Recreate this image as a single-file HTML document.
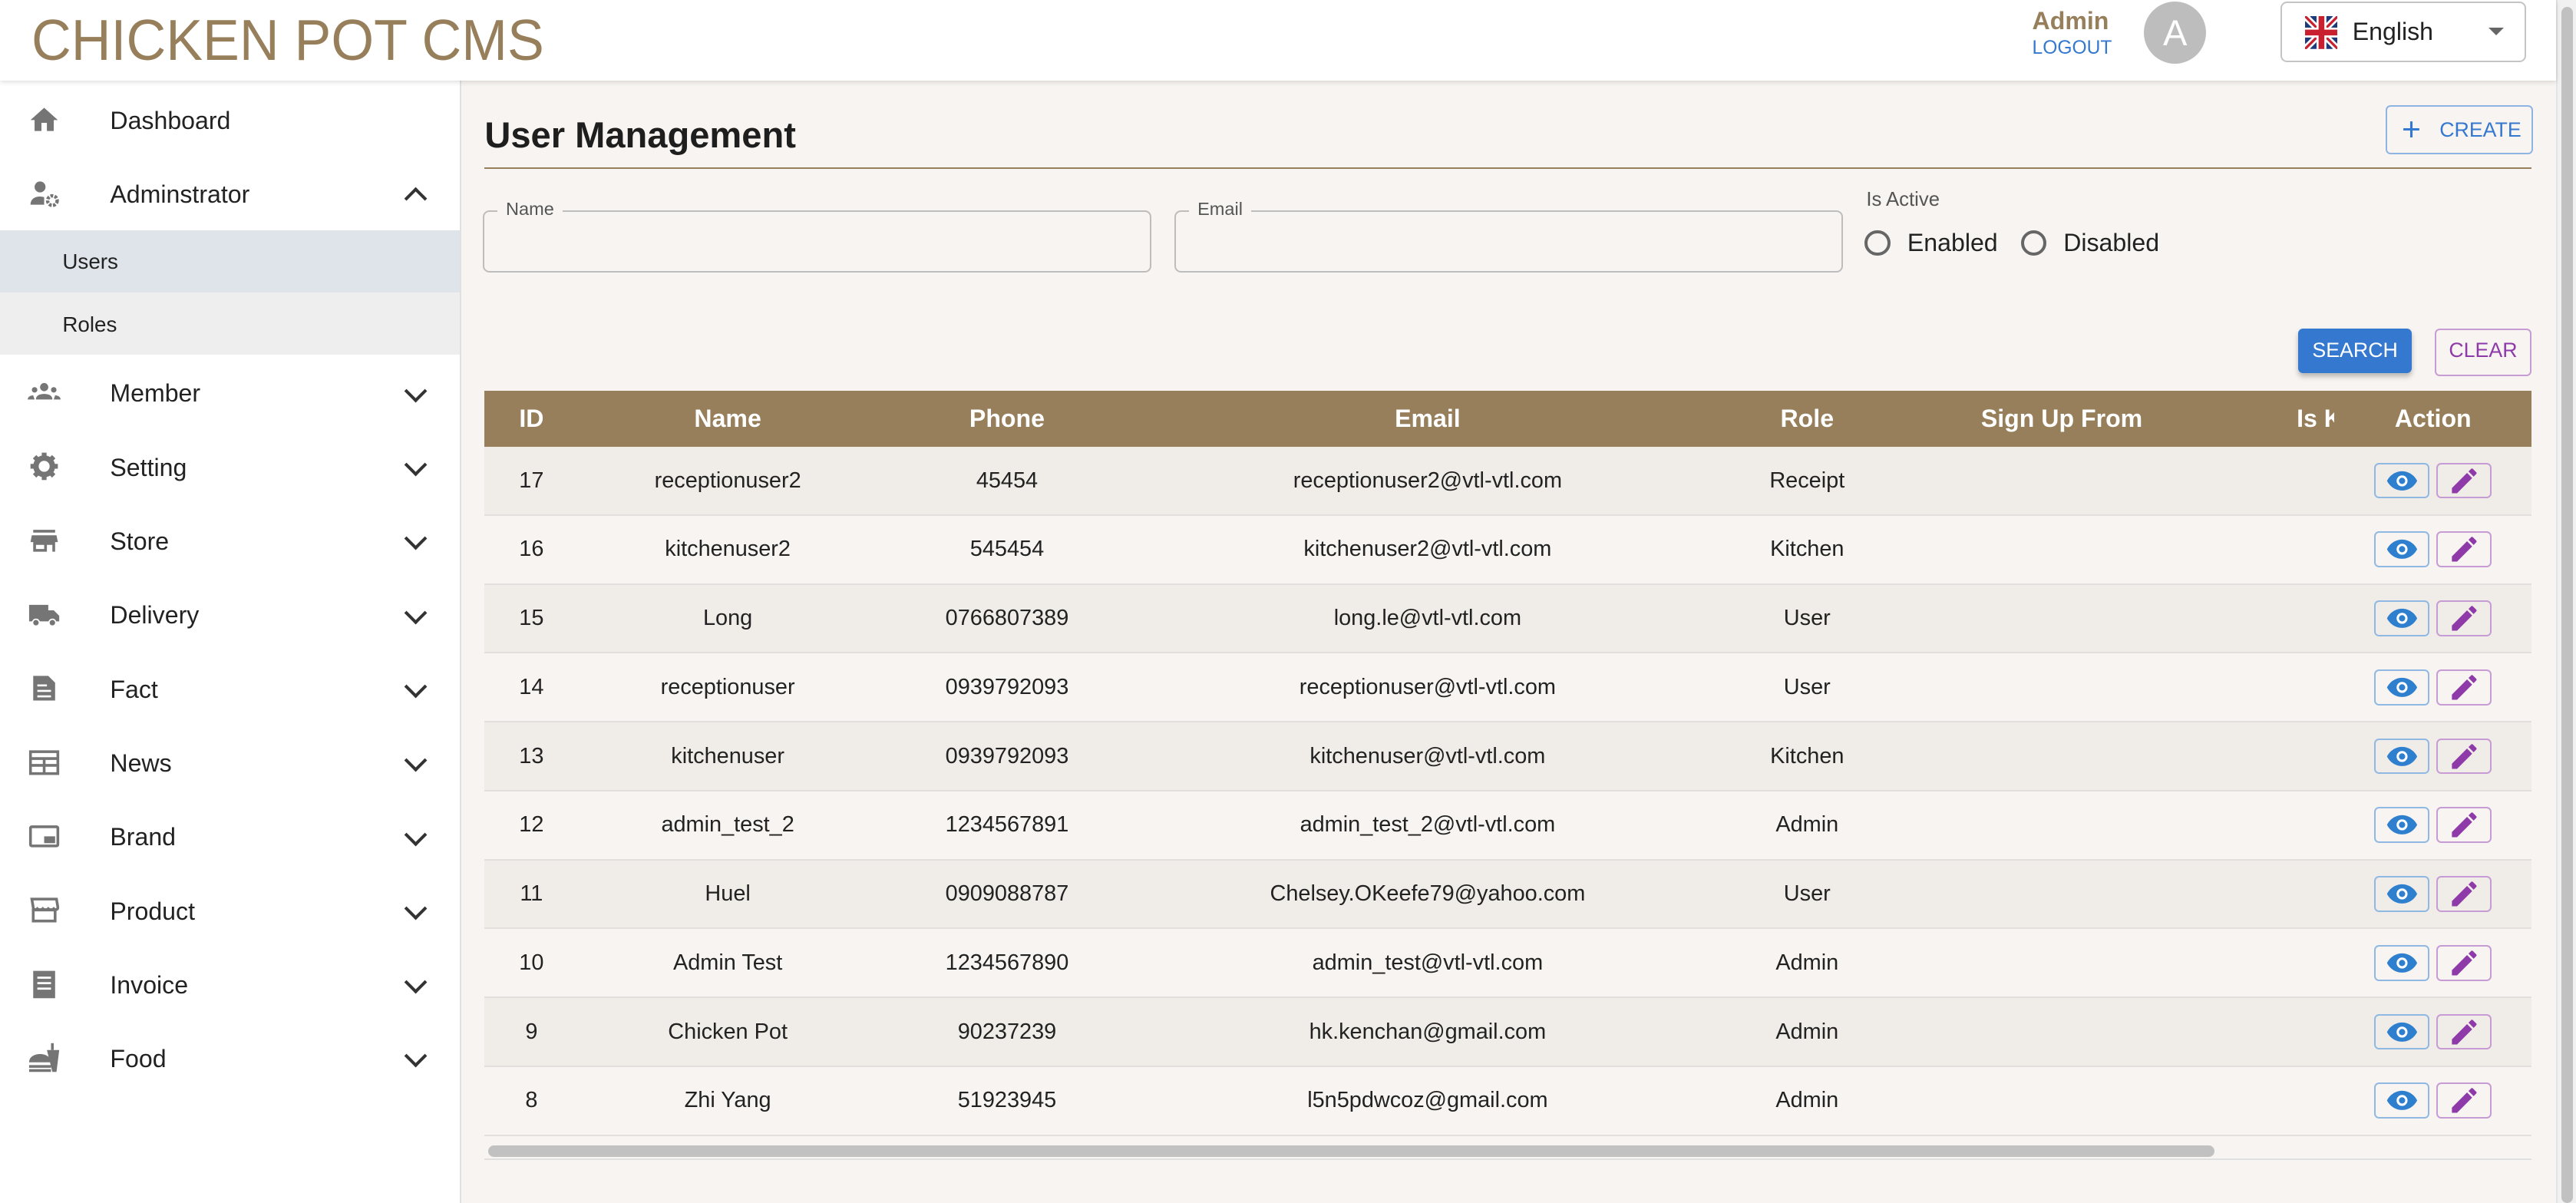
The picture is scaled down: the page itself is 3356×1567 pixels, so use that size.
<!DOCTYPE html>
<html><head><meta charset="utf-8">
<style>
html,body{margin:0;padding:0;}
body{width:1568px;height:732px;zoom:2.1403;overflow:hidden;font-family:"Liberation Sans",sans-serif;background:#f7f4f1;position:relative;color:#222;}
.hdr{position:absolute;left:0;top:0;width:1556px;height:49px;background:#fff;box-shadow:0 1px 3px rgba(0,0,0,.15);z-index:2;}
.logo{position:absolute;left:19px;top:4px;font-size:35px;color:#977f5c;transform:scaleX(0.957);transform-origin:0 0;white-space:nowrap;}
.admin{position:absolute;left:1237px;top:4px;font-size:15px;font-weight:bold;color:#977f5c;}
.logout{position:absolute;left:1237px;top:23px;font-size:11.5px;color:#3478d0;}
.av{position:absolute;left:1305px;top:1px;width:38px;height:38px;border-radius:50%;background:#bdbdbd;color:#fff;font-size:22px;text-align:center;line-height:38px;}
.lang{position:absolute;left:1388px;top:1px;width:148px;height:35px;border:1px solid #c4c4c4;border-radius:4px;background:#fff;}
.lang .t{position:absolute;left:43px;top:9px;font-size:15px;}
.lang .ar{position:absolute;left:126px;top:15px;border-left:5px solid transparent;border-right:5px solid transparent;border-top:5px solid #666;}
.sb{position:absolute;left:1556px;top:0;width:12px;height:732px;background:#f1f1f1;border-left:1px solid #e4e4e4;}
.sb div{position:absolute;left:2px;top:4px;width:7px;height:728px;background:#c1c1c1;border-radius:4px;}
.side{position:absolute;left:0;top:49px;width:280px;height:683px;background:#fff;border-right:1px solid #e0e0e0;}
.it{position:absolute;left:0;width:280px;height:38px;font-size:15px;}
.it .tx{position:absolute;left:67px;top:11px;}
.it .ic{position:absolute;left:16px;top:9px;width:22px;height:20px;}
.it .ch{position:absolute;left:248px;top:13px;width:8px;height:8px;border-right:2px solid #333;border-bottom:2px solid #333;transform:rotate(45deg);}
.it .up{transform:rotate(-135deg);top:17px;}
.sub{position:absolute;left:0;width:280px;height:38px;font-size:13px;}
.sub span{position:absolute;left:38px;top:12px;}
.title{position:absolute;left:295px;top:69px;font-size:22px;font-weight:bold;color:#1e1e1e;}
.line{position:absolute;left:295px;top:102px;width:1246px;height:1px;background:#977f5c;}
.create{position:absolute;left:1452px;top:64px;width:88px;height:28px;border:1px solid #8fb3e3;border-radius:3px;color:#3478d0;font-size:12.5px;}
.inp{position:absolute;top:128px;height:36px;border:1px solid #bdbdbd;border-radius:4px;}
.inp span{position:absolute;left:8px;top:-8px;background:#f7f4f1;padding:0 5px;font-size:11px;color:#555;}
.rad{position:absolute;top:140px;width:12px;height:12px;border:2px solid #666;border-radius:50%;}
.btn{position:absolute;top:200px;height:27px;border-radius:3px;font-size:12.5px;text-align:center;line-height:27px;}
table{position:absolute;left:295px;top:238px;width:1246px;border-collapse:collapse;table-layout:fixed;font-size:13.5px;}
th{background:#977f5c;color:#fff;height:34px;font-size:15px;font-weight:bold;padding:0;text-align:center;}
td{height:41px;padding:0;text-align:center;border-bottom:1px solid #e2e0de;}
tr.o td{background:#f0ece8;}
tr.e td{background:#f7f4f1;}
.ab{display:inline-block;width:32px;height:20px;border:1px solid #8fb8e3;border-radius:3px;vertical-align:middle;position:relative;margin:0 2px;}
.ab.p{border-color:#c79bd3;}
.ab svg{position:absolute;left:6px;top:0px;}
.hs{position:absolute;left:297px;top:697px;width:1051px;height:7px;background:#c1c1c1;border-radius:4px;}
.hsl{position:absolute;left:295px;top:705px;width:1246px;height:1px;background:#e0e0e0;}
</style></head><body>
<div class="hdr">
  <div class="logo">CHICKEN POT CMS</div>
  <div class="admin">Admin</div>
  <div class="logout">LOGOUT</div>
  <div class="av">A</div>
  <div class="lang">
    <svg style="position:absolute;left:14px;top:8px" width="20" height="20" viewBox="0 0 20 20"><rect width="20" height="20" rx="4" fill="#1f3a7a"/><path d="M0 0L20 20M20 0L0 20" stroke="#fff" stroke-width="4"/><path d="M0 0L20 20M20 0L0 20" stroke="#c8202f" stroke-width="1.5"/><path d="M10 0V20M0 10H20" stroke="#fff" stroke-width="6"/><path d="M10 0V20M0 10H20" stroke="#c8202f" stroke-width="3.5"/></svg>
    <span class="t">English</span><span class="ar"></span>
  </div>
</div>
<div class="sb"><div></div></div>
<div class="side">
  <div class="it" style="top:5px"><svg class="ic" viewBox="0 0 24 24"><path d="M10 20v-6h4v6h5v-8h3L12 3 2 12h3v8z" fill="#757575"/></svg><span class="tx">Dashboard</span></div>
  <div class="it" style="top:50px"><svg class="ic" viewBox="0 0 24 24"><circle cx="9" cy="7" r="4" fill="#757575"/><path d="M2 20c0-4 3-6 7-6 1 0 2 .2 3 .5V20z" fill="#757575"/><circle cx="18" cy="17" r="3.5" fill="none" stroke="#757575" stroke-width="2.5" stroke-dasharray="2 1"/></svg><span class="tx">Adminstrator</span><span class="ch up"></span></div>
  <div class="sub" style="top:91px;background:#dfe3ea"><span>Users</span></div>
  <div class="sub" style="top:129px;background:#eeeeee"><span>Roles</span></div>
  <div class="it" style="top:171px"><svg class="ic" viewBox="0 0 24 24"><circle cx="12" cy="8" r="3" fill="#757575"/><circle cx="5" cy="10" r="2" fill="#757575"/><circle cx="19" cy="10" r="2" fill="#757575"/><path d="M6 17c0-3 3-4 6-4s6 1 6 4zM0 17c0-2 2-3 4-3l1 3zM24 17c0-2-2-3-4-3l-1 3z" fill="#757575"/></svg><span class="tx">Member</span><span class="ch"></span></div>
  <div class="it" style="top:216px"><svg class="ic" viewBox="0 0 24 24"><circle cx="12" cy="12" r="6" fill="none" stroke="#757575" stroke-width="4"/><path d="M12 2v4M12 18v4M2 12h4M18 12h4M5 5l3 3M16 16l3 3M19 5l-3 3M8 16l-3 3" stroke="#757575" stroke-width="3.5"/></svg><span class="tx">Setting</span><span class="ch"></span></div>
  <div class="it" style="top:261px"><svg class="ic" viewBox="0 0 24 24"><path d="M4 4h16v2H4zM3 8h18l1 5h-2v7h-2v-5h-4v5H4v-7H2zM6 15v3h6v-3z" fill="#757575"/></svg><span class="tx">Store</span><span class="ch"></span></div>
  <div class="it" style="top:306px"><svg class="ic" viewBox="0 0 24 24"><path d="M1 5h14v12H1zM15 9h4l4 4v4h-8z" fill="#757575"/><circle cx="6" cy="18" r="2.5" fill="#757575" stroke="#fff"/><circle cx="18" cy="18" r="2.5" fill="#757575" stroke="#fff"/></svg><span class="tx">Delivery</span><span class="ch"></span></div>
  <div class="it" style="top:351px"><svg class="ic" viewBox="0 0 24 24"><path d="M4 3h11l5 5v13H4z" fill="#757575"/><path d="M7 10h7M7 14h10M7 18h10" stroke="#fff" stroke-width="1.5"/></svg><span class="tx">Fact</span><span class="ch"></span></div>
  <div class="it" style="top:396px"><svg class="ic" viewBox="0 0 24 24"><rect x="2" y="4" width="20" height="16" fill="none" stroke="#757575" stroke-width="2"/><path d="M2 9h20M12 9v11M12 14h10M2 14h10" stroke="#757575" stroke-width="2"/></svg><span class="tx">News</span><span class="ch"></span></div>
  <div class="it" style="top:441px"><svg class="ic" viewBox="0 0 24 24"><rect x="2" y="5" width="20" height="14" rx="1" fill="none" stroke="#757575" stroke-width="2"/><rect x="12" y="12" width="8" height="5" fill="#757575"/></svg><span class="tx">Brand</span><span class="ch"></span></div>
  <div class="it" style="top:486px"><svg class="ic" viewBox="0 0 24 24"><path d="M3 4h18l1 6c0 2-2 2-3 1-1 1-3 1-4 0-1 1-3 1-4 0-1 1-3 1-4 0-1 1-3 1-3-1zM4 12h16v8H4z" fill="none" stroke="#757575" stroke-width="2"/></svg><span class="tx">Product</span><span class="ch"></span></div>
  <div class="it" style="top:531px"><svg class="ic" viewBox="0 0 24 24"><path d="M4 2h16v20H4z" fill="#757575"/><path d="M7 7h10M7 11h10M7 15h10" stroke="#fff" stroke-width="1.5"/></svg><span class="tx">Invoice</span><span class="ch"></span></div>
  <div class="it" style="top:576px"><svg class="ic" viewBox="0 0 24 24"><path d="M1 15c0-4 4-6 8-6s8 2 8 6zM1 17h16v2H1zM1 20h16v2H1zM14 6h9l-2 16h-3z" fill="#757575"/><path d="M18 1v5" stroke="#757575" stroke-width="2"/></svg><span class="tx">Food</span><span class="ch"></span></div>
</div>

<div class="title">User Management</div>
<div class="create"><span style="position:absolute;left:9px;top:4px;font-size:20px;line-height:20px">+</span><span style="position:absolute;left:32px;top:7px">CREATE</span></div>
<div class="line"></div>
<div class="inp" style="left:294px;width:405px"><span>Name</span></div>
<div class="inp" style="left:715px;width:405px"><span>Email</span></div>
<div style="position:absolute;left:1136px;top:115px;font-size:12px;color:#555">Is Active</div>
<div class="rad" style="left:1135px"></div><div style="position:absolute;left:1161px;top:139px;font-size:15px">Enabled</div>
<div class="rad" style="left:1230px"></div><div style="position:absolute;left:1256px;top:139px;font-size:15px">Disabled</div>
<div class="btn" style="left:1399px;width:69px;background:#3478d0;color:#fff;box-shadow:0 2px 3px rgba(0,0,0,.25)">SEARCH</div>
<div class="btn" style="left:1482px;width:57px;border:1px solid #c79bd3;color:#8e3aa8;line-height:25px">CLEAR</div>

<table>
<colgroup><col style="width:57px"><col style="width:182px"><col style="width:158px"><col style="width:354px"><col style="width:108px"><col style="width:202px"><col style="width:65px"><col style="width:120px"></colgroup>
<tr><th>ID</th><th>Name</th><th>Phone</th><th>Email</th><th>Role</th><th>Sign Up From</th><th style="overflow:hidden;white-space:nowrap;text-align:left;padding-left:42px">Is Kitchen</th><th>Action</th></tr>
<tbody id="tb">
<tr class="o"><td>17</td><td>receptionuser2</td><td>45454</td><td>receptionuser2@vtl-vtl.com</td><td>Receipt</td><td></td><td></td><td>A</td></tr>
</tbody>
</table>
<div class="hs"></div><div class="hsl"></div>
<script>
var rows=[["17","receptionuser2","45454","receptionuser2@vtl-vtl.com","Receipt"],["16","kitchenuser2","545454","kitchenuser2@vtl-vtl.com","Kitchen"],["15","Long","0766807389","long.le@vtl-vtl.com","User"],["14","receptionuser","0939792093","receptionuser@vtl-vtl.com","User"],["13","kitchenuser","0939792093","kitchenuser@vtl-vtl.com","Kitchen"],["12","admin_test_2","1234567891","admin_test_2@vtl-vtl.com","Admin"],["11","Huel","0909088787","Chelsey.OKeefe79@yahoo.com","User"],["10","Admin Test","1234567890","admin_test@vtl-vtl.com","Admin"],["9","Chicken Pot","90237239","hk.kenchan@gmail.com","Admin"],["8","Zhi Yang","51923945","l5n5pdwcoz@gmail.com","Admin"]];
var eye='<span class="ab"><svg width="20" height="20" viewBox="0 0 24 24"><path d="M12 5C7 5 3 8 1 12c2 4 6 7 11 7s9-3 11-7c-2-4-6-7-11-7z" fill="#2f7fcf"/><circle cx="12" cy="12" r="4" fill="#fff"/><circle cx="12" cy="12" r="2.3" fill="#2f7fcf"/></svg></span>';
var pen='<span class="ab p"><svg width="20" height="20" viewBox="0 0 24 24"><path d="M3 17.25V21h3.75L17.8 9.94l-3.75-3.75zM20.7 7.04a1 1 0 000-1.41l-2.34-2.34a1 1 0 00-1.41 0l-1.83 1.83 3.75 3.75z" fill="#8e3aa8"/></svg></span>';
var h='';rows.forEach(function(r,i){h+='<tr class="'+(i%2?'e':'o')+'"><td>'+r[0]+'</td><td>'+r[1]+'</td><td>'+r[2]+'</td><td>'+r[3]+'</td><td>'+r[4]+'</td><td></td><td></td><td>'+eye+pen+'</td></tr>';});
document.getElementById('tb').innerHTML=h;
</script>
</body></html>
